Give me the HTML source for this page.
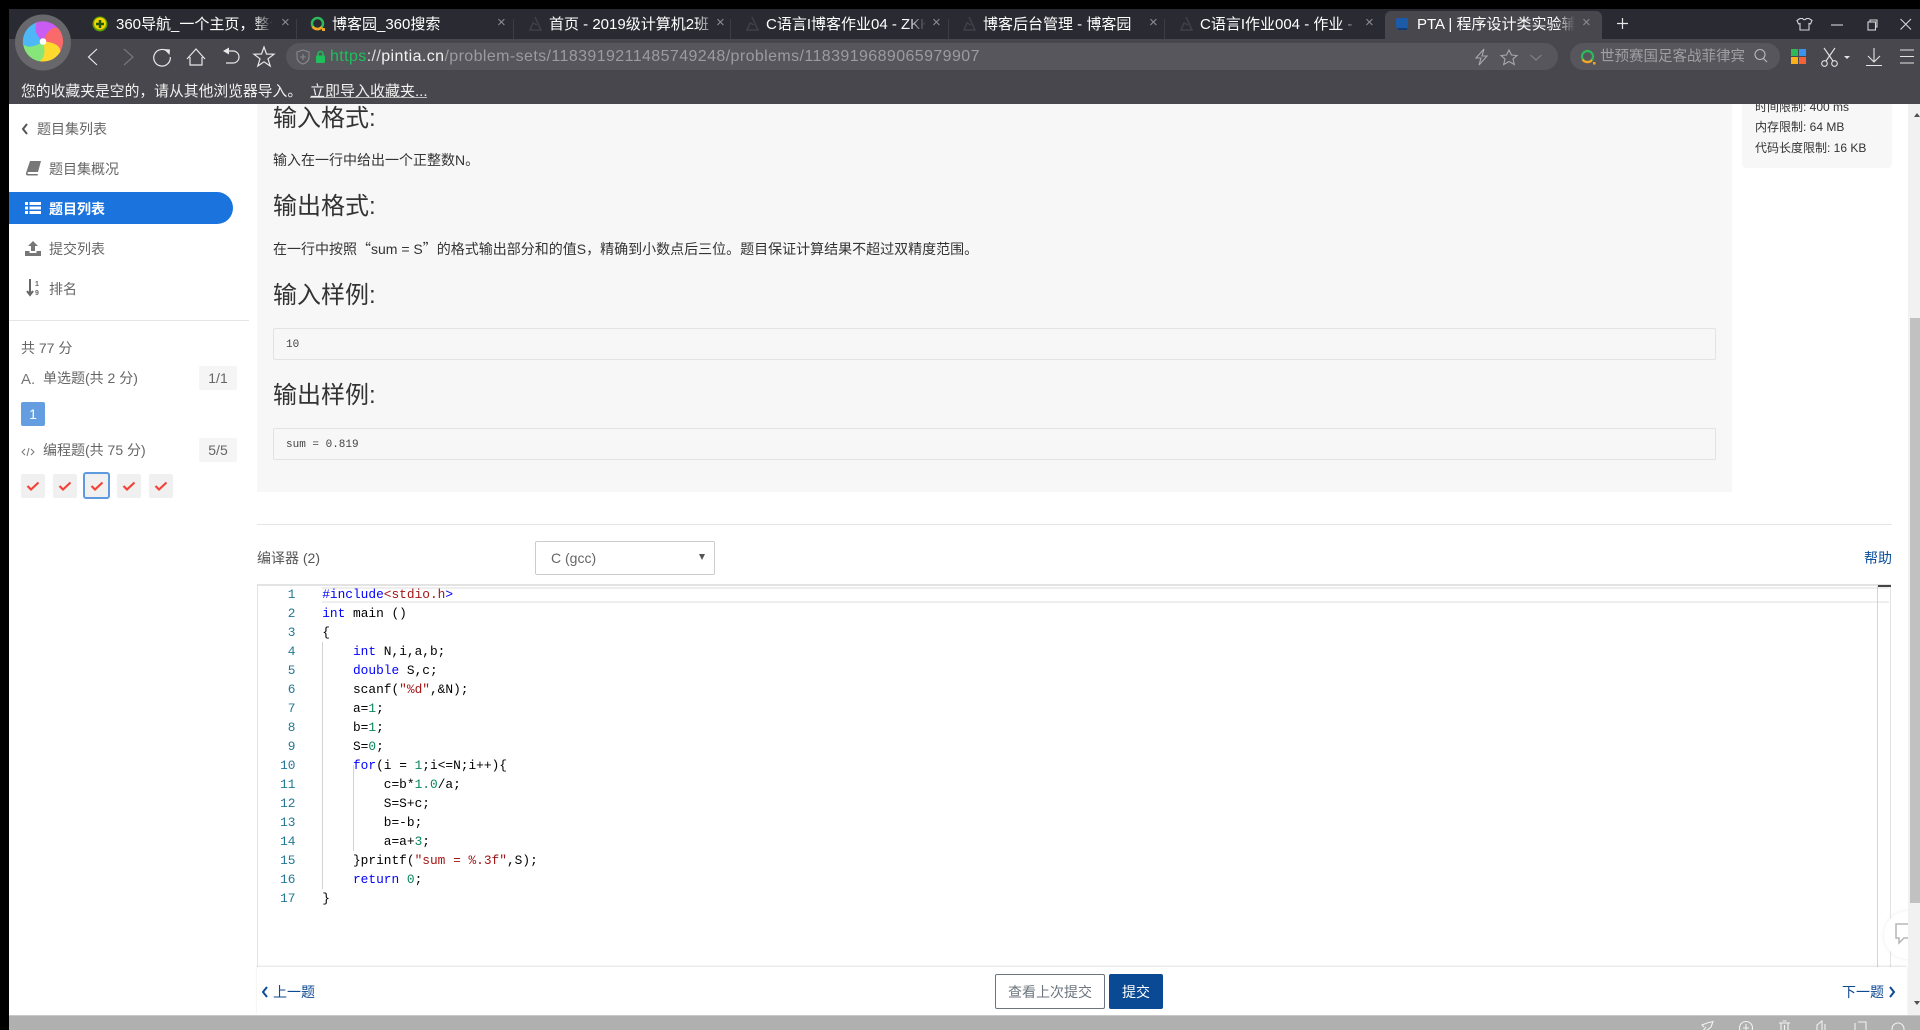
<!DOCTYPE html>
<html lang="zh"><head><meta charset="utf-8"><title>PTA</title>
<style>
html,body{margin:0;padding:0;width:1920px;height:1030px;overflow:hidden;background:#fff}
body{position:relative;font-family:"Liberation Sans","Noto Sans CJK SC",sans-serif;font-size:14px;color:#333}
.a{position:absolute}
.t{position:absolute;white-space:nowrap;line-height:20px}
.tab{position:absolute;top:14px;white-space:nowrap;line-height:22px;font-size:15px;color:#fff;overflow:hidden;-webkit-mask-image:linear-gradient(90deg,#000 88%,transparent)}
.x{position:absolute;top:13px;line-height:20px;font-size:15px;color:#8c8c92;font-family:"Liberation Sans",sans-serif}
.sep{position:absolute;top:19px;height:20px;width:1px;background:#3d3d45}
.nav{color:#666}
h3{position:absolute;margin:0;left:273px;font-weight:400;font-size:24px;line-height:32px;color:#333;white-space:nowrap}
.box{position:absolute;left:273px;width:1441px;height:30px;border:1px solid #e3e3e3;border-radius:2px;background:#f7f7f7;font:11px/32px "Liberation Mono",monospace;color:#444;text-indent:12px}
.badge{position:absolute;left:199px;width:38px;height:24px;background:#f5f5f5;border-radius:2px;text-align:center;line-height:24px;color:#666;font-size:14px}
.ck{position:absolute;top:474px;width:24px;height:24px;background:#f0f0f0;border-radius:2px}
.ck svg{position:absolute;left:5px;top:6px}
#code{position:absolute;left:322.2px;top:585px;font:12.83px/19px "Liberation Mono",monospace;color:#000;white-space:pre}
#nums{position:absolute;left:260px;width:35.5px;top:585px;font:12.83px/19px "Liberation Mono",monospace;color:#237893;text-align:right}
.k{color:#00f}.s{color:#a31515}.n{color:#098658}
</style></head><body>

<!-- content -->
<div class="a" style="left:257px;top:104px;width:1475px;height:388px;background:#f7f7f7"></div>
<h3 style="top:103px">输入格式:</h3>
<div class="t" style="left:273px;top:150px;color:#333">输入在一行中给出一个正整数N。</div>
<h3 style="top:191px">输出格式:</h3>
<div class="t" style="left:273px;top:239px;color:#333">在一行中按照<span style="font-family:'Noto Sans CJK SC',sans-serif">“</span>sum = S<span style="font-family:'Noto Sans CJK SC',sans-serif">”</span>的格式输出部分和的值S，精确到小数点后三位。题目保证计算结果不超过双精度范围。</div>
<h3 style="top:280px">输入样例:</h3>
<div class="box" style="top:328px">10</div>
<h3 style="top:380px">输出样例:</h3>
<div class="box" style="top:428px">sum = 0.819</div>

<!-- info box -->
<div class="a" style="left:1742px;top:90px;width:150px;height:78px;background:#f7f7f7;border-radius:4px"></div>
<div class="t" style="left:1755px;top:97px;font-size:12px">时间限制: 400 ms</div>
<div class="t" style="left:1755px;top:117px;font-size:12px">内存限制: 64 MB</div>
<div class="t" style="left:1755px;top:138px;font-size:12px">代码长度限制: 16 KB</div>

<!-- sidebar -->
<svg class="a" style="left:20px;top:122px" width="9" height="14" viewBox="0 0 9 14"><path d="M7 2 L3 7 L7 12" fill="none" stroke="#555" stroke-width="2"/></svg>
<div class="t nav" style="left:37px;top:119px">题目集列表</div>
<svg class="a" style="left:25px;top:160px" width="17" height="16" viewBox="0 0 17 16"><path d="M5 1 H16 L13 12 H4 Q2.500 12 2.500 13 Q2.500 14 4 14 H13 L12.500 15.500 H3 Q0.500 15.500 1 13 Z" fill="#777"/></svg>
<div class="t nav" style="left:49px;top:159px">题目集概况</div>
<div class="a" style="left:9px;top:192px;width:224px;height:32px;background:#1b74dd;border-radius:0 16px 16px 0"></div>
<svg class="a" style="left:25px;top:201px" width="16" height="14" viewBox="0 0 16 14"><path d="M0 1h3v3H0zM4.500 1H16v3H4.500zM0 5.500h3v3H0zM4.500 5.500H16v3H4.500zM0 10h3v3H0zM4.500 10H16v3H4.500z" fill="#fff"/></svg>
<div class="t" style="left:49px;top:199px;color:#fff;font-weight:700">题目列表</div>
<svg class="a" style="left:25px;top:241px" width="16" height="15" viewBox="0 0 16 15"><path d="M8 0 L13 5 H10 V10 H6 V5 H3 Z M0 10 H4.500 V12 H11.500 V10 H16 V15 H0 Z" fill="#777"/></svg>
<div class="t nav" style="left:49px;top:239px">提交列表</div>
<svg class="a" style="left:26px;top:279px" width="16" height="18" viewBox="0 0 16 18"><path d="M4 0 V14 M1 12 L4 16 L7 12" fill="none" stroke="#666" stroke-width="2"/><text x="9" y="7" font-size="7" font-weight="700" fill="#666" font-family="Liberation Sans">1</text><text x="9" y="16" font-size="7" font-weight="700" fill="#666" font-family="Liberation Sans">9</text></svg>
<div class="t nav" style="left:49px;top:279px">排名</div>
<div class="a" style="left:9px;top:320px;width:240px;height:1px;background:#e5e5e5"></div>
<div class="t nav" style="left:21px;top:338px">共 77 分</div>
<div class="t" style="left:21px;top:370px;font-size:15px;color:#777">A.</div>
<div class="t nav" style="left:43px;top:368px">单选题(共 2 分)</div>
<div class="badge" style="top:366px">1/1</div>
<div class="a" style="left:21px;top:402px;width:24px;height:24px;background:#659ee0;border-radius:2px;color:#fff;text-align:center;line-height:24px">1</div>
<svg class="a" style="left:21px;top:446px" width="14" height="12" viewBox="0 0 14 12"><path d="M4 3 L1 6 L4 9 M10 3 L13 6 L10 9 M8 2 L6 10" fill="none" stroke="#777" stroke-width="1"/></svg>
<div class="t nav" style="left:43px;top:440px">编程题(共 75 分)</div>
<div class="badge" style="top:438px">5/5</div>
<div class="ck" style="left:21px"><svg width="14" height="12" viewBox="0 0 14 12"><path d="M1.500 6 L5 9.500 L12.500 2.500" fill="none" stroke="#f44336" stroke-width="2.200"/></svg></div>
<div class="ck" style="left:53px"><svg width="14" height="12" viewBox="0 0 14 12"><path d="M1.500 6 L5 9.500 L12.500 2.500" fill="none" stroke="#f44336" stroke-width="2.200"/></svg></div>
<div class="ck" style="left:83px;top:472px;width:27px;height:27px;box-sizing:border-box;border:2px solid #5f9ae0;border-radius:3px"><svg style="left:4.500px;top:5.500px" width="14" height="12" viewBox="0 0 14 12"><path d="M1.500 6 L5 9.500 L12.500 2.500" fill="none" stroke="#f44336" stroke-width="2.200"/></svg></div>
<div class="ck" style="left:117px"><svg width="14" height="12" viewBox="0 0 14 12"><path d="M1.500 6 L5 9.500 L12.500 2.500" fill="none" stroke="#f44336" stroke-width="2.200"/></svg></div>
<div class="ck" style="left:149px"><svg width="14" height="12" viewBox="0 0 14 12"><path d="M1.500 6 L5 9.500 L12.500 2.500" fill="none" stroke="#f44336" stroke-width="2.200"/></svg></div>

<!-- editor header -->
<div class="a" style="left:257px;top:524px;width:1635px;height:1px;background:#e5e5e5"></div>
<div class="t nav" style="left:257px;top:548px;color:#555">编译器 (2)</div>
<div class="a" style="left:535px;top:541px;width:178px;height:32px;border:1px solid #ccc;border-radius:2px;background:#fff"></div>
<div class="t" style="left:551px;top:548px;color:#666;font-size:14px">C (gcc)</div>
<div class="a" style="left:699px;top:554px;width:0;height:0;border-left:3.500px solid transparent;border-right:3.500px solid transparent;border-top:6px solid #555"></div>
<div class="t" style="left:1864px;top:548px;color:#0a4f9e">帮助</div>

<!-- editor -->
<div class="a" style="left:257px;top:584px;width:1634px;height:383px;border:solid #e3e3e3;border-width:2px 1px 0 1px;box-sizing:border-box;background:#fff"></div>
<div class="a" style="left:322px;top:587px;width:1567px;height:16px;border:2px solid #eee;border-width:2px 0;box-sizing:border-box"></div>
<div class="a" style="left:1877px;top:586px;width:1px;height:381px;background:#d4d4d4"></div>
<div class="a" style="left:1878px;top:585px;width:13px;height:2px;background:#444"></div>
<div class="a" style="left:322px;top:642px;width:1px;height:247px;background:#d3d3d3"></div>
<div class="a" style="left:353px;top:765px;width:1px;height:86px;background:#d3d3d3"></div>
<div id="nums">1<br>2<br>3<br>4<br>5<br>6<br>7<br>8<br>9<br>10<br>11<br>12<br>13<br>14<br>15<br>16<br>17</div>
<div id="code"><span class="k">#include</span><span class="s">&lt;stdio.h</span><span class="k">&gt;</span>
<span class="k">int</span> main ()
{
    <span class="k">int</span> N,i,a,b;
    <span class="k">double</span> S,c;
    scanf(<span class="s">"%d"</span>,&amp;N);
    a=<span class="n">1</span>;
    b=<span class="n">1</span>;
    S=<span class="n">0</span>;
    <span class="k">for</span>(i = <span class="n">1</span>;i&lt;=N;i++){
        c=b*<span class="n">1.0</span>/a;
        S=S+c;
        b=-b;
        a=a+<span class="n">3</span>;
    }printf(<span class="s">"sum = %.3f"</span>,S);
    <span class="k">return</span> <span class="n">0</span>;
}</div>

<!-- footer -->
<div class="a" style="left:257px;top:967px;width:1650px;height:48px;background:#fff;box-shadow:0 -1px 2px rgba(0,0,0,.12)"></div>
<svg class="a" style="left:261px;top:986px" width="8" height="12" viewBox="0 0 8 12"><path d="M6 1 L2 6 L6 11" fill="none" stroke="#0d4a92" stroke-width="2"/></svg>
<div class="t" style="left:273px;top:982px;color:#0d4a92">上一题</div>
<div class="a" style="left:995px;top:974px;width:108px;height:33px;border:1px solid #6c757d;border-radius:2px;text-align:center;line-height:35px;color:#6c757d;font-size:14px;background:#fff">查看上次提交</div>
<div class="a" style="left:1109px;top:974px;width:54px;height:35px;background:#0a4a94;border-radius:2px;text-align:center;line-height:36px;color:#fff;font-size:14px">提交</div>
<div class="t" style="left:1842px;top:982px;color:#0d4a92">下一题</div>
<svg class="a" style="left:1888px;top:986px" width="8" height="12" viewBox="0 0 8 12"><path d="M2 1 L6 6 L2 11" fill="none" stroke="#0d4a92" stroke-width="2"/></svg>

<!-- feedback bubble + scrollbar -->
<div class="a" style="left:1884px;top:911px;width:48px;height:48px;border-radius:50%;background:#fff;box-shadow:0 0 4px rgba(0,0,0,.08)"></div>
<svg class="a" style="left:1895px;top:923px" width="15" height="22" viewBox="0 0 15 22"><path d="M15 1 H1 V15 H4 V20 L9 15 H15" fill="none" stroke="#b5b5b5" stroke-width="1.500"/></svg>
<div class="a" style="left:1908px;top:104px;width:12px;height:911px;background:#f1f1f1"></div>
<div class="a" style="left:1910px;top:318px;width:10px;height:585px;background:#c1c1c1"></div>
<div class="a" style="left:1914px;top:113px;width:0;height:0;border-left:3.500px solid transparent;border-right:3.500px solid transparent;border-bottom:4px solid #505050"></div>
<div class="a" style="left:1914px;top:1001px;width:0;height:0;border-left:3.500px solid transparent;border-right:3.500px solid transparent;border-top:4px solid #505050"></div>

<!-- status bar -->
<div class="a" style="left:9px;top:1015px;width:1911px;height:15px;background:#b0b0b0;border-top:1px solid #c8c8c8;box-sizing:border-box"></div>
<svg class="a" style="left:1695px;top:1018px" width="225" height="12" viewBox="0 0 225 12"><g fill="none" stroke="#f2f2f2" stroke-width="1.100"><path d="M12 5 L18 3.500 L16 9 L11 13 M12 5 L7 7 L9 9 M11 9 L8 13"/><circle cx="51" cy="10" r="6.500"/><path d="M51 6 V13 M48 10 H54"/><path d="M84 5 H95 M86 5 V14 H93 V5 M87.500 3 H91.500 M89.500 7 V13"/><path d="M122 12 V7 L127 3 V12 M130 6 V12"/><path d="M160 5 V12 M163 4 H171 V12"/><circle cx="203" cy="11" r="6"/></g></svg>

<!-- chrome: black frame -->
<div class="a" style="left:0;top:0;width:1920px;height:9px;background:#000"></div>
<div class="a" style="left:0;top:0;width:9px;height:1030px;background:#000"></div>
<div class="a" style="left:9px;top:9px;width:1911px;height:30px;background:#2a2a33"></div>
<div class="a" style="left:9px;top:39px;width:1911px;height:65px;background:#47474d"></div>

<!-- active tab -->
<div class="a" style="left:1385px;top:11px;width:217px;height:28px;background:#47474d;border-radius:6px 6px 0 0"></div>

<!-- tabs -->
<svg class="a" style="left:92px;top:16px" width="16" height="16" viewBox="0 0 16 16"><circle cx="8" cy="8" r="7.500" fill="#5f9e00"/><circle cx="8" cy="7.500" r="6" fill="#f5d400"/><path d="M8 4 V12 M4 8 H12" stroke="#1d5a10" stroke-width="2.500"/></svg>
<div class="tab" style="left:116px;width:157px">360导航_一个主页，整个世界</div>
<div class="x" style="left:281px">×</div><div class="sep" style="left:296px"></div>
<svg class="a" style="left:310px;top:16px" width="16" height="16" viewBox="0 0 16 16"><circle cx="7.500" cy="7.500" r="5.500" fill="none" stroke="#2dbb5a" stroke-width="2.500"/><path d="M2.500 10.500 A6 6 0 0 0 12 11" fill="none" stroke="#f5a623" stroke-width="2.500"/><rect x="12" y="12" width="3" height="3" fill="#f5a623"/></svg>
<div class="tab" style="left:332px;width:160px">博客园_360搜索</div>
<div class="x" style="left:497px">×</div><div class="sep" style="left:513px"></div>
<svg class="a" style="left:528px;top:16px" width="15" height="16" viewBox="0 0 15 16"><path d="M7 1 L13 14 L2 14 L5 7 L9 9" fill="none" stroke="#404048" stroke-width="1.500"/></svg>
<div class="tab" style="left:549px;width:168px">首页 - 2019级计算机2班</div>
<div class="x" style="left:716px">×</div><div class="sep" style="left:730px"></div>
<svg class="a" style="left:745px;top:16px" width="15" height="16" viewBox="0 0 15 16"><path d="M7 1 L13 14 L2 14 L5 7 L9 9" fill="none" stroke="#404048" stroke-width="1.500"/></svg>
<div class="tab" style="left:766px;width:160px">C语言I博客作业04 - ZKK</div>
<div class="x" style="left:932px">×</div><div class="sep" style="left:948px"></div>
<svg class="a" style="left:962px;top:16px" width="15" height="16" viewBox="0 0 15 16"><path d="M7 1 L13 14 L2 14 L5 7 L9 9" fill="none" stroke="#404048" stroke-width="1.500"/></svg>
<div class="tab" style="left:983px;width:160px;-webkit-mask-image:none">博客后台管理 - 博客园</div>
<div class="x" style="left:1149px">×</div><div class="sep" style="left:1164px"></div>
<svg class="a" style="left:1179px;top:16px" width="15" height="16" viewBox="0 0 15 16"><path d="M7 1 L13 14 L2 14 L5 7 L9 9" fill="none" stroke="#404048" stroke-width="1.500"/></svg>
<div class="tab" style="left:1200px;width:158px">C语言I作业004 - 作业 - 博客</div>
<div class="x" style="left:1365px">×</div>
<svg class="a" style="left:1395px;top:17px" width="14" height="14" viewBox="0 0 14 14"><rect x="1" y="1" width="12" height="10" rx="2" fill="#1c5ba8"/><rect x="3" y="11" width="9" height="2" fill="#113e78"/></svg>
<div class="tab" style="left:1417px;width:158px">PTA | 程序设计类实验辅助教学平台</div>
<div class="x" style="left:1582px">×</div>
<svg class="a" style="left:1615px;top:16px" width="15" height="15" viewBox="0 0 15 15"><path d="M7.500 2 V13 M2 7.500 H13" stroke="#e6e6e6" stroke-width="1.200"/></svg>

<!-- window controls -->
<svg class="a" style="left:1795px;top:14px" width="125" height="20" viewBox="0 0 125 20"><g fill="none" stroke="#d6d6d6" stroke-width="1.100"><path d="M5 4.500 L2 6.500 L3.500 10 L5 9.500 V16 H14 V9.500 L15.500 10 L17 6.500 L14 4.500 H11.500 Q9.500 7 7.500 4.500 Z"/><path d="M36 11 H48"/><rect x="73" y="8" width="7.500" height="8"/><path d="M75 8 V6 H82 V13 H80.500"/><path d="M105.500 5 L116 15.500 M116 5 L105.500 15.500"/></g></svg>

<!-- logo -->
<svg class="a" style="left:15px;top:14px" width="57" height="57" viewBox="-28 -27.500 57 57">
<circle cx="0" cy="1" r="28" fill="#68686c"/>
<path d="M0 0 C-8 -6 -12 -14 -8 -18.500 A20 20 0 0 1 16 -12 C8 -12 3 -8 0 0Z" fill="#c95cf2"/>
<path transform="rotate(72)" d="M0 0 C-8 -6 -12 -14 -8 -18.500 A20 20 0 0 1 16 -12 C8 -12 3 -8 0 0Z" fill="#fb6a6a"/>
<path transform="rotate(144)" d="M0 0 C-8 -6 -12 -14 -8 -18.500 A20 20 0 0 1 16 -12 C8 -12 3 -8 0 0Z" fill="#ffd92e"/>
<path transform="rotate(216)" d="M0 0 C-8 -6 -12 -14 -8 -18.500 A20 20 0 0 1 16 -12 C8 -12 3 -8 0 0Z" fill="#86e67a"/>
<path transform="rotate(288)" d="M0 0 C-8 -6 -12 -14 -8 -18.500 A20 20 0 0 1 16 -12 C8 -12 3 -8 0 0Z" fill="#4db8f5"/>
<circle r="3.300" fill="#fff"/>
</svg>

<!-- nav icons -->
<svg class="a" style="left:85px;top:44px" width="200" height="26" viewBox="0 0 200 26"><g fill="none" stroke="#e8e8e8" stroke-width="1.200">
<path d="M12 5 L3.500 13 L12 21"/>
<path d="M39 5 L48 13 L39 21" stroke="#77777c"/>
<path d="M83 8 A8.300 8.300 0 1 0 85.300 13"/>
<path d="M102 15 L111 5 L120 15 M105 13 V21 H117 V13"/>
<path d="M143 7 H148 A6 6 0 0 1 148 19 H141"/>
<path d="M179 3 L181.500 10 L189 10.200 L183 14.800 L185.200 22 L179 17.800 L172.800 22 L175 14.800 L169 10.200 L176.500 10 Z"/>
</g><path d="M79 5 L85 5.500 L84.500 11 Z M138 7 L144 3.500 V10.500 Z" fill="#e8e8e8"/></svg>

<!-- omnibar -->
<div class="a" style="left:286px;top:43px;width:1272px;height:27px;background:#56565c;border-radius:14px"></div>
<svg class="a" style="left:296px;top:49px" width="14" height="16" viewBox="0 0 14 16"><path d="M7 1 L13 3 V8 Q13 13 7 15 Q1 13 1 8 V3 Z M7 5 V11 M4 8 H10" fill="none" stroke="#88888d" stroke-width="1.100"/></svg>
<svg class="a" style="left:316px;top:50px" width="9" height="13" viewBox="0 0 9 13"><path d="M2 6 V4 A2.500 2.500 0 0 1 7 4 V6" fill="none" stroke="#1fbf5c" stroke-width="1.400"/><rect x="0" y="5.500" width="9" height="7.500" rx="1" fill="#1fbf5c"/></svg>
<div class="t" style="left:330px;top:46px;font-size:16px;letter-spacing:.4px;color:#9b9ba0;line-height:22px"><span style="color:#1fbf5c">https</span><span style="color:#ddd">://</span><span style="color:#f2f2f2">pintia.cn</span>/problem-sets/1183919211485749248/problems/1183919689065979907</div>
<svg class="a" style="left:1473px;top:48px" width="90" height="18" viewBox="0 0 90 18"><g fill="none" stroke="#a8a8ad" stroke-width="1.100"><path d="M11 1 L3 10 H8 L6 17 L14 8 H9 Z"/><path d="M36 2 L38.500 7 L44 7.500 L40 11 L41.300 16.500 L36 13.500 L30.700 16.500 L32 11 L28 7.500 L33.500 7 Z"/><path d="M57.500 7 L63 12 L68.500 7" stroke="#85858a"/></g></svg>

<!-- search -->
<div class="a" style="left:1570px;top:43px;width:210px;height:27px;background:#56565c;border-radius:14px"></div>
<svg class="a" style="left:1580px;top:49px" width="16" height="16" viewBox="0 0 16 16"><circle cx="7.500" cy="7.500" r="5.500" fill="none" stroke="#2dbb5a" stroke-width="2.200"/><path d="M2.500 10.500 A6 6 0 0 0 12 11" fill="none" stroke="#f5a623" stroke-width="2.200"/><rect x="13" y="13" width="2.500" height="2.500" fill="#f5a623"/></svg>
<div class="t" style="left:1600px;top:46px;width:146px;overflow:hidden;font-size:14.500px;color:#a0a0a4;line-height:22px">世预赛国足客战菲律宾</div>
<svg class="a" style="left:1753px;top:48px" width="16" height="16" viewBox="0 0 16 16"><circle cx="7" cy="6.500" r="5" fill="none" stroke="#b8b8bc" stroke-width="1.100"/><path d="M10.500 10.500 L14 14" stroke="#b8b8bc" stroke-width="1.200"/></svg>

<!-- right toolbar -->
<div class="a" style="left:1791px;top:49px;width:7px;height:7px;background:#2fb85a"></div>
<div class="a" style="left:1799px;top:49px;width:7px;height:7px;background:#3b93ee"></div>
<div class="a" style="left:1791px;top:57px;width:7px;height:7px;background:#fbb11c"></div>
<div class="a" style="left:1799px;top:57px;width:7px;height:7px;background:#f4623a"></div>
<svg class="a" style="left:1820px;top:46px" width="100" height="22" viewBox="0 0 100 22"><g fill="none" stroke="#e4e4e4" stroke-width="1.100"><path d="M4 2 L13 15 M15 2 L6 15"/><circle cx="4.500" cy="17.500" r="2.800"/><circle cx="14.500" cy="17.500" r="2.800"/><path d="M54 2 V15 M48 10 L54 16 L60 10 M46 19.500 H62"/><path d="M80 4 H94 M80 10.500 H94 M80 17 H94"/></g><path d="M24 10 H30 L27 13 Z" fill="#e4e4e4"/></svg>

<!-- bookmarks bar -->
<div class="t" style="left:21px;top:82px;color:#f0f0f0;font-size:14.800px">您的收藏夹是空的，请从其他浏览器导入。</div>
<div class="t" style="left:310px;top:82px;color:#f0f0f0;font-size:15px">立即导入收藏夹...</div>
<div class="a" style="left:310px;top:97px;width:117px;height:1px;background:#bbb"></div>
</body></html>
